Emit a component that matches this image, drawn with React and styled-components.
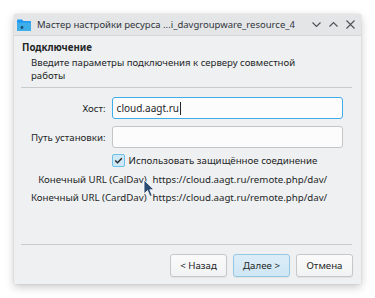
import React from "react";
import styled, { createGlobalStyle } from "styled-components";

const Global = createGlobalStyle`
  html, body { margin: 0; padding: 0; background: #ffffff; }
  body { font-family: "Noto Sans", "Liberation Sans", sans-serif; color: #232627; }
`;

const Page = styled.div`
  width: 375px;
  height: 298px;
  box-sizing: border-box;
  padding: 14px 0 0 14px;
  position: relative;
  overflow: hidden;
`;

const Window = styled.div`
  width: 347px;
  height: 270px;
  background: #eff0f1;
  display: flex;
  flex-direction: column;
  box-shadow: 0 3px 10px rgba(0, 0, 0, 0.22), 0 0 1px rgba(0, 0, 0, 0.35);
  border-radius: 2px 2px 0 0;
`;

const TitleBar = styled.div`
  height: 21px;
  display: flex;
  align-items: center;
  padding: 0 5px 0 3px;
  background: #e3e5e7;
  border-bottom: 1px solid #d5d7d9;
  font-size: 9.5px;
  color: #31363b;
`;

const TitleText = styled.div`
  flex: 1;
  margin-left: 6px;
  white-space: nowrap;
`;

const TitleButtons = styled.div`
  display: flex;
  gap: 6px;
  align-items: center;
`;

const TitleIcon = styled.svg`
  width: 11px;
  height: 11px;
  display: block;
`;

const Header = styled.div`
  padding: 5px 8px 0 8px;
`;

const HeaderTitle = styled.div`
  font-size: 9.7px;
  font-weight: 700;
  line-height: 14px;
`;

const HeaderSub = styled.div`
  font-size: 9.6px;
  line-height: 13px;
  padding: 1px 50px 0 9px;
`;

const Separator = styled.div`
  height: 1px;
  background: #c8cacc;
  margin: ${(p) => p.$m || "0 9px 0 7px"};
`;

const Form = styled.div`
  display: grid;
  grid-template-columns: auto 1fr;
  column-gap: 6px;
  row-gap: ${(p) => p.$rowGap || "7px"};
  align-items: center;
  padding: ${(p) => p.$pad};
  font-size: 9.7px;
`;

const Label = styled.div`
  justify-self: end;
  white-space: nowrap;
`;

const Input = styled.div`
  height: 22px;
  box-sizing: border-box;
  background: #fcfcfc;
  border: 1px solid ${(p) => (p.$focus ? "#3daee9" : "#c3c5c7")};
  border-radius: 3px;
  display: flex;
  align-items: center;
  padding-left: 4px;
  font-size: 10px;
`;

const Caret = styled.span`
  display: inline-block;
  width: 1px;
  height: 13px;
  background: #232627;
  margin-left: 1px;
`;

const CheckRow = styled.div`
  grid-column: 2;
  display: flex;
  align-items: center;
  gap: 4px;
  margin-top: -1px;
  white-space: nowrap;
`;

const CheckBox = styled.div`
  width: 11px;
  height: 11px;
  border: 1px solid #6cc1ec;
  background: #cfe8f6;
  border-radius: 2px;
  display: flex;
  align-items: center;
  justify-content: center;
`;

const Spacer = styled.div`
  flex: 1;
`;

const ButtonRow = styled.div`
  display: flex;
  justify-content: flex-end;
  gap: 6px;
  padding: 9px 8px 7px 0;
`;

const Button = styled.div`
  width: 57px;
  height: 23px;
  box-sizing: border-box;
  border: 1px solid ${(p) => (p.$default ? "#93c7e4" : "#c5c7c9")};
  background: ${(p) =>
    p.$default
      ? "linear-gradient(#dcedf8, #cfe6f4)"
      : "linear-gradient(#fbfbfb, #f1f2f3)"};
  border-radius: 3px;
  display: flex;
  align-items: center;
  justify-content: center;
  font-size: 9.7px;
  box-shadow: 0 1px 1px rgba(0, 0, 0, 0.06);
`;

const Cursor = styled.svg`
  position: absolute;
  left: 143px;
  top: 179px;
  width: 12px;
  height: 19px;
`;

export default function App() {
  return (
    <>
      <Global />
      <Page>
        <Window>
          <TitleBar>
            <svg width="14" height="12" viewBox="0 0 14 12">
              <path d="M0 1.5 Q0 0.5 1 0.5 H5 L6.5 2 H13 Q14 2 14 3 V11 Q14 12 13 12 H1 Q0 12 0 11 Z" fill="#1d99f3" />
              <rect x="0" y="3.5" width="14" height="8.5" rx="0.8" fill="#3daee9" />
              <circle cx="5" cy="8.5" r="1.4" fill="#1b4f72" />
            </svg>
            <TitleText>Мастер настройки ресурса ...i_davgroupware_resource_4</TitleText>
            <TitleButtons>
              <TitleIcon viewBox="0 0 11 11">
                <path d="M1.5 3.5 L5.5 7.5 L9.5 3.5" fill="none" stroke="#4d5256" strokeWidth="1.1" />
              </TitleIcon>
              <TitleIcon viewBox="0 0 11 11">
                <path d="M1.5 7.5 L5.5 3.5 L9.5 7.5" fill="none" stroke="#4d5256" strokeWidth="1.1" />
              </TitleIcon>
              <TitleIcon viewBox="0 0 11 11">
                <path d="M1.5 1.5 L9.5 9.5 M9.5 1.5 L1.5 9.5" fill="none" stroke="#4d5256" strokeWidth="1.1" />
              </TitleIcon>
            </TitleButtons>
          </TitleBar>
          <Header>
            <HeaderTitle>Подключение</HeaderTitle>
            <HeaderSub>Введите параметры подключения к серверу совместной работы</HeaderSub>
          </Header>
          <Separator $m="5px 9px 0 7px" />
          <Form $pad="9px 18px 0 17px">
            <Label>Хост:</Label>
            <Input $focus>
              cloud.aagt.ru<Caret />
            </Input>
            <Label>Путь установки:</Label>
            <Input />
            <span />
            <CheckRow>
              <CheckBox>
                <svg width="9" height="9" viewBox="0 0 9 9">
                  <path d="M1.2 4.6 L3.5 6.8 L7.8 2.2" fill="none" stroke="#232627" strokeWidth="1.4" />
                </svg>
              </CheckBox>
              Использовать защищённое соединение
            </CheckRow>
          </Form>
          <Form $pad="6px 10px 0 17px" $rowGap="5px">
            <Label>Конечный URL (CalDav)</Label>
            <div>https://cloud.aagt.ru/remote.php/dav/</div>
            <Label>Конечный URL (CardDav)</Label>
            <div>https://cloud.aagt.ru/remote.php/dav/</div>
          </Form>
          <Spacer />
          <Separator />
          <ButtonRow>
            <Button>&lt; Назад</Button>
            <Button $default>Далее &gt;</Button>
            <Button>Отмена</Button>
          </ButtonRow>
        </Window>
        <Cursor viewBox="0 0 12 19">
          <path d="M1 1 L1 15 L4.5 11.5 L7 17.5 L9.2 16.5 L6.8 10.8 L11 10.8 Z" fill="#2c4b73" stroke="#ffffff" strokeWidth="0.8" strokeLinejoin="round" />
        </Cursor>
      </Page>
    </>
  );
}
